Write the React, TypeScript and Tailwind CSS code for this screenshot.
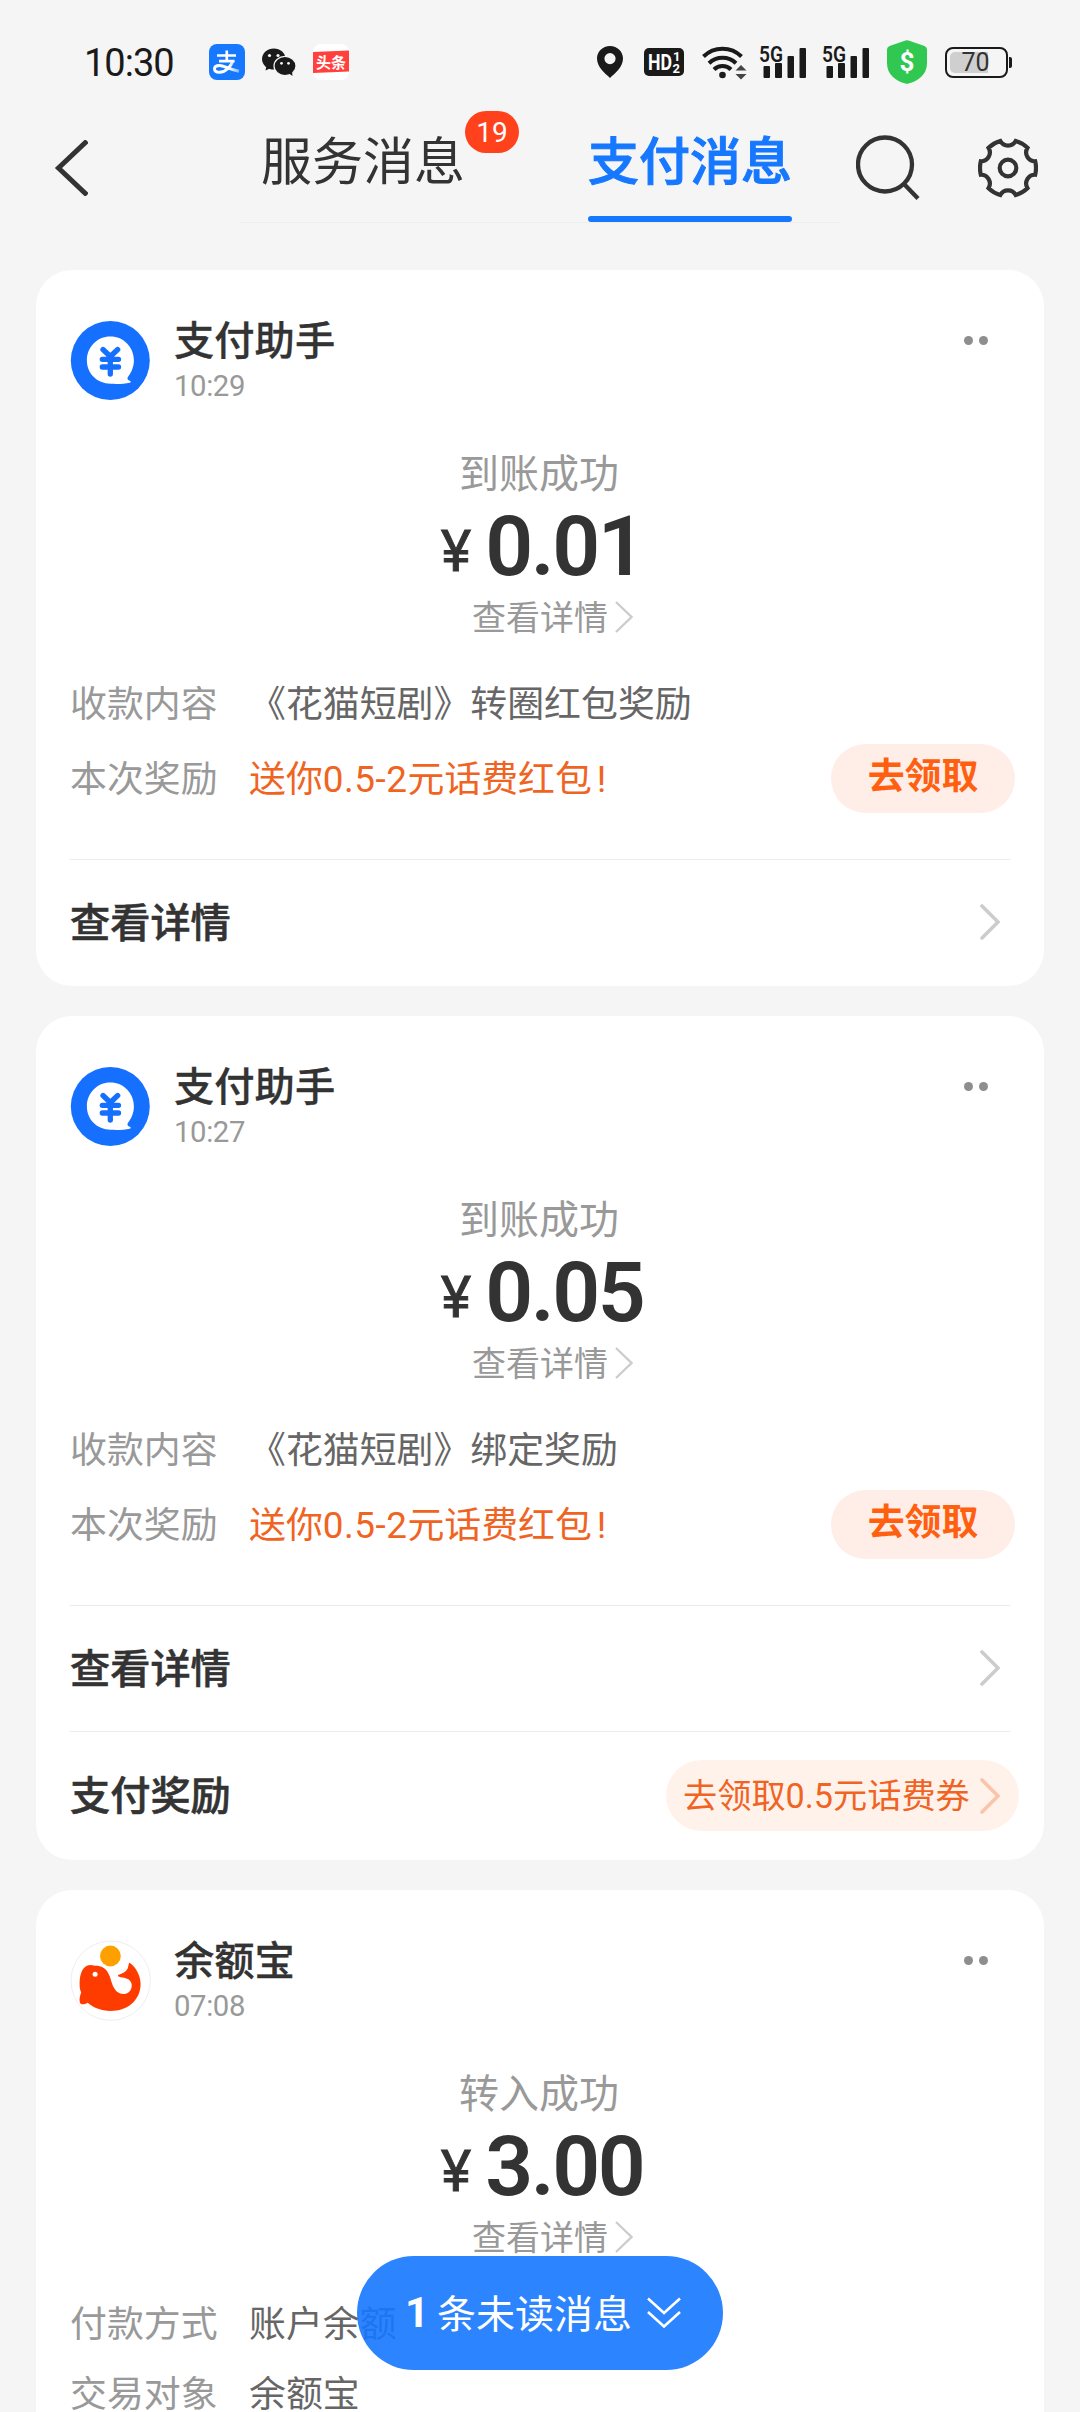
import type { ReactNode } from 'react';

function StatusBar() {
  return (
    <div className="flex h-[124px] shrink-0 items-center pl-[84px] pr-[68px] text-[#1a1a1a]">
      <div className="w-[125px] pt-[1px] text-[38px] leading-[40px] tracking-[-1px]">10:30</div>
      <AlipayIcon />
      <WechatIcon />
      <ToutiaoIcon />
      <div className="ml-auto flex items-center">
        <svg className="h-[32px] w-[26px]" viewBox="0 0 26 32">
          <path fillRule="evenodd" fill="#1a1a1a" d="M13 0C5.6 0 0 5.6 0 12.6 0 21 8 27.500 13 32 18 27.500 26 21 26 12.600 26 5.600 20.400 0 13 0ZM13 7a5.600 5.600 0 1 1 0 11.200a5.600 5.600 0 0 1 0-11.200Z" />
        </svg>
        <svg className="ml-[21px] h-[28px] w-[40px] overflow-visible" viewBox="0 0 40 28">
          <rect width="40" height="28" rx="5" fill="#1a1a1a" />
          <text x="4" y="22" fill="#fff" fontSize="22" fontWeight="700" textLength="24" lengthAdjust="spacingAndGlyphs">HD</text>
          <text x="29" y="13" fill="#fff" fontSize="13" fontWeight="700">1</text>
          <text x="28.500" y="25" fill="#fff" fontSize="13" fontWeight="700">2</text>
        </svg>
        <svg className="ml-[18px] h-[36px] w-[45px]" viewBox="0 0 45 36">
          <g fill="none" stroke="#1a1a1a" strokeWidth="4">
            <path d="M1.500 12.500a27 27 0 0 1 38 0" />
            <path d="M7 19.200a19.500 19.500 0 0 1 27 0" />
            <path d="M12 25.500a12 12 0 0 1 17 0" />
          </g>
          <circle cx="20.500" cy="31" r="3.300" fill="#1a1a1a" />
          <path fill="#444" d="M39 21l5.500 5.500h-11zM39 35.500l5.500-5.500h-11z" />
        </svg>
        <Signal className="ml-[13px]" />
        <Signal className="ml-[17px]" />
        <svg className="ml-[18px] h-[44px] w-[40px]" viewBox="0 0 40 44">
          <path fill="#30c850" d="M18.500 0.600Q20 0 21.500 0.600L37.500 6Q40 7 40 9.500V23C40 35 31 41 21.500 43.600Q20 44 18.500 43.600C9 41 0 35 0 23V9.500Q0 7 2.500 6Z" />
          <text x="20" y="31" textAnchor="middle" fill="#fff" fontSize="26" fontWeight="700">$</text>
        </svg>
        <div className="ml-[18px] flex items-center">
          <div className="flex h-[31px] w-[63px] items-center rounded-[8px] border-2 border-[#1a1a1a] p-[3px]">
            <div className="h-full w-[38px] rounded-l-[5px] bg-[#cfcfcf]">
              <div className="w-[51px] text-center text-[25px] leading-[22px] text-[#333]">70</div>
            </div>
          </div>
          <div className="ml-[1px] h-[11px] w-[3px] rounded-r-[2px] bg-[#1a1a1a]" />
        </div>
      </div>
    </div>
  );
}

function AlipayIcon() {
  return (
    <svg className="h-[36px] w-[36px]" viewBox="0 0 36 36">
      <defs>
        <linearGradient id="tail" x1="0" x2="1">
          <stop offset="0.6" stopColor="#fff" />
          <stop offset="1" stopColor="#fff" stopOpacity="0.450" />
        </linearGradient>
      </defs>
      <rect width="36" height="36" rx="8" fill="#1677ff" />
      <g fill="none" stroke="#fff" strokeWidth="2.700">
        <path d="M8 11.500H27M17.800 6.500V16.500M10 17.200H25.500" />
        <path d="M24.200 16.500C22 22 17 28.300 10.500 28.300C7 28.300 5.500 26.600 5.500 24.800C5.500 22.800 7.500 21.500 10.500 21.500C15 21.500 19 25 30 27.300" stroke="url(#tail)" strokeWidth="3" />
      </g>
    </svg>
  );
}

function WechatIcon() {
  return (
    <svg className="ml-[17px] h-[28px] w-[34px]" viewBox="0 0 34 28">
      <ellipse cx="11.800" cy="11" rx="11.800" ry="10.600" fill="#1a1a1a" />
      <path d="M4.500 18L3.500 22.500L9 20Z" fill="#1a1a1a" />
      <ellipse cx="23" cy="18" rx="11" ry="9.600" fill="#1a1a1a" stroke="#f5f5f5" strokeWidth="1.200" />
      <path d="M27 25.500L30.500 28L30 23.500Z" fill="#1a1a1a" />
      <g fill="#f5f5f5">
        <circle cx="7.500" cy="7.500" r="1.600" />
        <circle cx="16" cy="7.500" r="1.600" />
        <circle cx="19.500" cy="15.300" r="1.400" />
        <circle cx="26.500" cy="15.300" r="1.400" />
      </g>
    </svg>
  );
}

function ToutiaoIcon() {
  return (
    <svg className="ml-[17px] h-[36px] w-[36px]" viewBox="0 0 36 36">
      <rect width="36" height="36" rx="8" fill="#fff" />
      <path d="M0 8L36 6.500V27.500L0 29Z" fill="#ff403c" />
      <text x="18" y="23.500" textAnchor="middle" fill="#fff" fontSize="15" fontWeight="700">头条</text>
    </svg>
  );
}

function Signal({ className }: { className: string }) {
  return (
    <svg className={`h-[34px] w-[46px] overflow-visible ${className}`} viewBox="0 0 46 34">
      <text x="-1" y="16.500" fill="#1a1a1a" fontSize="22" fontWeight="600" textLength="24" lengthAdjust="spacingAndGlyphs">5G</text>
      <g fill="#1a1a1a">
        <rect x="3.500" y="21" width="6.500" height="12" rx="1" />
        <rect x="15" y="18" width="7" height="15" rx="1" />
        <rect x="27.500" y="11" width="6.500" height="22" rx="1" />
        <rect x="39.500" y="3" width="6.500" height="30" rx="1" />
      </g>
    </svg>
  );
}

// Six-lobed cog outline: convex rim arcs joined by small concave scallops.
function gearPath(radius: number, half: number, scallop: number) {
  const at = (deg: number) => {
    const a = ((deg - 90) * Math.PI) / 180;
    return `${(30 + radius * Math.cos(a)).toFixed(2)} ${(30 + radius * Math.sin(a)).toFixed(2)}`;
  };
  let d = `M${at(-half)}`;
  for (let k = 0; k < 6; k++) {
    d += `A${scallop} ${scallop} 0 0 0 ${at(k * 60 + half)}`;
    d += `A${radius} ${radius} 0 0 1 ${at((k + 1) * 60 - half)}`;
  }
  return `${d}Z`;
}

function Header() {
  return (
    <div className="flex h-[146px] shrink-0 items-start pl-[54px]">
      <svg className="mt-[16px] h-[56px] w-[34px]" viewBox="0 0 34 56">
        <path d="M33 1L4.500 28L33 55" fill="none" stroke="#333" strokeWidth="5" />
      </svg>
      <div className="ml-[152px] flex h-[99px] w-[600px] border-b border-[#eee] pl-[21px] text-[51px] leading-[51px]">
        <div className="relative w-[204px] pt-[13px] text-[#333]">
          服务消息
          <span className="absolute left-full top-[-13px] flex h-[42px] w-[54px] items-center justify-center rounded-full bg-[#ff411c] pt-[2px] text-[28px] leading-none text-white">19</span>
        </div>
        <div className="ml-[123px] flex w-[204px] flex-col justify-between pt-[13px] font-medium text-[#1677ff]">
          <span className="[-webkit-text-stroke:1px_#1677ff]">支付消息</span>
          <div className="h-[6px] rounded-full bg-[#1677ff]" />
        </div>
      </div>
      <svg className="ml-[16px] mt-[11px] h-[65px] w-[64px]" viewBox="0 0 64 65">
        <g fill="none" stroke="#333" strokeWidth="4.300">
          <circle cx="29" cy="29.500" r="27" />
          <path d="M47.500 48.500L62 63.500" />
        </g>
      </svg>
      <svg className="ml-[58px] mt-[14px] h-[60px] w-[60px]" viewBox="0 0 60 60">
        <g fill="none" stroke="#333" strokeWidth="4.200">
          <path d={gearPath(28, 16, 8.8)} />
          <circle cx="30" cy="30" r="8.300" />
        </g>
      </svg>
    </div>
  );
}

function PayAvatar() {
  return (
    <svg className="h-[80px] w-[80px]" viewBox="0 0 80 80">
      <circle cx="40.300" cy="39.500" r="39.500" fill="#1670ff" />
      <path fill="#fff" d="M40.300 15.500C53.700 15.500 63.900 26 63.900 39.500C63.900 46 61.200 51.500 58.200 55.500C56.700 57.800 57.700 59 60.200 60C61.200 60.600 60.700 61.500 59.700 61.700C54.700 62.800 47.700 63.200 40.700 62.800C26.700 62.300 16.900 52.500 16.900 39.500C16.900 26 27.200 15.500 40.300 15.500Z" />
      <path fill="none" stroke="#1670ff" strokeWidth="5.300" strokeLinecap="round" strokeLinejoin="round" d="M33 28.500L40.300 35.500L47.700 28.500M32.300 38.300H48.500M32.300 46H48.500M40.300 37V53" />
    </svg>
  );
}

function WhaleAvatar() {
  return (
    <svg className="h-[80px] w-[80px] overflow-visible" viewBox="-0.7 0 80 80">
      <circle cx="40" cy="39.700" r="39.700" fill="#fff" stroke="#eee" />
      <circle cx="39.700" cy="15" r="10.400" fill="#ffa000" />
      <path fill="#ff3c00" d="M19.300 24Q22 24 24 24.800C29 24.500 35.500 26 38.900 35C41.500 42 43 52.800 53 53C60 53 62 46 60.600 42C59 37.500 54 36.800 51 36.500Q47 35.500 47.200 34.700C47.500 33 53 33.500 56.500 28.300C58 26 57.500 22.500 58.900 21.700C63 24 69.900 33 69.900 43C69.900 59 57 70 39.900 70C30 70 22.500 66.500 17 61.800C14 63.500 11 63.800 10 62.700C8 60.500 9 55 10.500 51.500C9 49 8.900 45 8.900 42.300C9 33 12 24.500 19.300 24Z" />
      <circle cx="24.400" cy="33.300" r="2.500" fill="#fff" />
    </svg>
  );
}

function Chevron({ className }: { className: string }) {
  return (
    <svg className={`h-[36px] w-[20px] ${className}`} viewBox="0 0 20 36">
      <path d="M2 2L18 18L2 34" fill="none" stroke="currentColor" strokeWidth="3.600" strokeLinecap="round" />
    </svg>
  );
}

type CardProps = {
  avatar: ReactNode;
  name: string;
  time: string;
  status: string;
  amount: string;
  children: ReactNode;
};

function Card({ avatar, name, time, status, amount, children }: CardProps) {
  return (
    <section className="flex shrink-0 flex-col rounded-[36px] bg-white pl-[34px] pt-[51px]">
      <div className="flex h-[80px]">
        {avatar}
        <div className="ml-[24px]">
          <div className="text-[40.300px] font-medium leading-[41px] text-[#333] [-webkit-text-stroke:0.3px_#333]">{name}</div>
          <div className="mt-[9px] text-[29.300px] leading-[30px] tracking-[-0.4px] text-[#999]">{time}</div>
        </div>
        <div className="ml-auto mr-[56px] mt-[15px] flex gap-[6px]">
          <span className="size-[9px] rounded-full bg-[#8e8e8e]" />
          <span className="size-[9px] rounded-full bg-[#8e8e8e]" />
        </div>
      </div>
      <div className="mr-[34px] mt-[54px] flex flex-col items-center">
        <div className="mr-[2px] text-[40px] leading-[40px] text-[#999]">{status}</div>
        <div className="mt-[21px] flex h-[60px] pl-[4px] text-[#333]">
          <span className="text-[58px] leading-[70px] [-webkit-text-stroke:0.8px_#333]">¥</span>
          <span className="ml-[14px] text-[84px] font-semibold leading-[61px] tracking-[-2.500px]">{amount}</span>
        </div>
        <div className="mt-[25px] flex pl-[25px] text-[34px] leading-[34px] text-[#999]">
          查看详情
          <svg className="ml-[7px] h-[32px] w-[18px]" viewBox="0 0 18 32">
            <path d="M1 1L16.500 16L1 31" fill="none" stroke="#ccc" strokeWidth="2.300" />
          </svg>
        </div>
      </div>
      {children}
    </section>
  );
}

function Field({ label, value, className = '' }: { label: string; value: string; className?: string }) {
  return (
    <div className={`flex text-[36.900px] leading-[38px] ${className}`}>
      <span className="w-[179px] text-[#999]">{label}</span>
      <span className="text-[#666]">{value}</span>
    </div>
  );
}

function RewardField() {
  return (
    <div className="mr-[29px] mt-[20px] flex h-[70px] text-[36.900px] leading-[71px]">
      <span className="w-[179px] text-[#999]">本次奖励</span>
      <span className="text-[#f06423]">
        送你<span className="tracking-[0.500px]">0.5-2</span>元话费红包<span className="ml-[5px]">!</span>
      </span>
      <button className="ml-auto h-[69px] w-[184px] rounded-full bg-[#ffeee8] pb-[3px] font-bold leading-[66px] text-[#ff6010]">去领取</button>
    </div>
  );
}

function LinkRow({ label, className, children }: { label: string; className: string; children: ReactNode }) {
  return (
    <div className={`flex items-center font-medium text-[#333] ${className}`}>
      <span className="pt-[2px] text-[40.200px] leading-[40px] [-webkit-text-stroke:0.6px_#333]">{label}</span>
      {children}
    </div>
  );
}

function Divider({ className = '' }: { className?: string }) {
  return <div className={`mr-[34px] h-px bg-[#ececec] ${className}`} />;
}

export default function App() {
  return (
    <div className="relative flex h-[2412px] w-[1080px] flex-col overflow-hidden bg-[#f5f5f5] font-[Roboto,'Noto_Sans_CJK_SC',sans-serif]">
      <StatusBar />
      <Header />
      <main className="flex flex-col gap-[30px] px-[36px]">
        <Card avatar={<PayAvatar />} name="支付助手" time="10:29" status="到账成功" amount="0.01">
          <Field label="收款内容" value="《花猫短剧》转圈红包奖励" className="mt-[51px]" />
          <RewardField />
          <Divider className="mt-[45px]" />
          <LinkRow label="查看详情" className="h-[126px]">
            <Chevron className="mb-[2px] ml-auto mr-[44px] text-[#ccc]" />
          </LinkRow>
        </Card>
        <Card avatar={<PayAvatar />} name="支付助手" time="10:27" status="到账成功" amount="0.05">
          <Field label="收款内容" value="《花猫短剧》绑定奖励" className="mt-[51px]" />
          <RewardField />
          <Divider className="mt-[45px]" />
          <LinkRow label="查看详情" className="h-[125px]">
            <Chevron className="mb-[2px] ml-auto mr-[44px] text-[#ccc]" />
          </LinkRow>
          <Divider />
          <LinkRow label="支付奖励" className="h-[128px]">
            <span className="mb-[1px] ml-auto mr-[25px] flex h-[71px] w-[353px] items-center rounded-full bg-[#fff2eb] pl-[17px] text-[34.200px] font-normal leading-[40px] text-[#f06423]">
              <span className="pt-[1px]">去领取0.5元话费券</span>
              <Chevron className="ml-auto mr-[19px] text-[#fbc3a9]" />
            </span>
          </LinkRow>
        </Card>
        <Card avatar={<WhaleAvatar />} name="余额宝" time="07:08" status="转入成功" amount="3.00">
          <Field label="付款方式" value="账户余额" className="mt-[51px]" />
          <Field label="交易对象" value="余额宝" className="mt-[32px] pb-[60px]" />
        </Card>
      </main>
      <button className="absolute left-[357px] top-[2256px] flex h-[114px] w-[366px] items-center rounded-full bg-[#1677ff]/90 pl-[48px] text-[39px] leading-[40px] text-white">
        <span className="w-[32px] text-left text-[42px] font-bold">1</span>
        <span className="pt-[4px]">条未读消息</span>
        <svg className="ml-[15px] h-[32px] w-[34px]" viewBox="0 0 34 32">
          <path d="M1 1.500L17 16L33 1.500M1 15L17 29.500L33 15" fill="none" stroke="#fff" strokeWidth="2.600" />
        </svg>
      </button>
    </div>
  );
}
